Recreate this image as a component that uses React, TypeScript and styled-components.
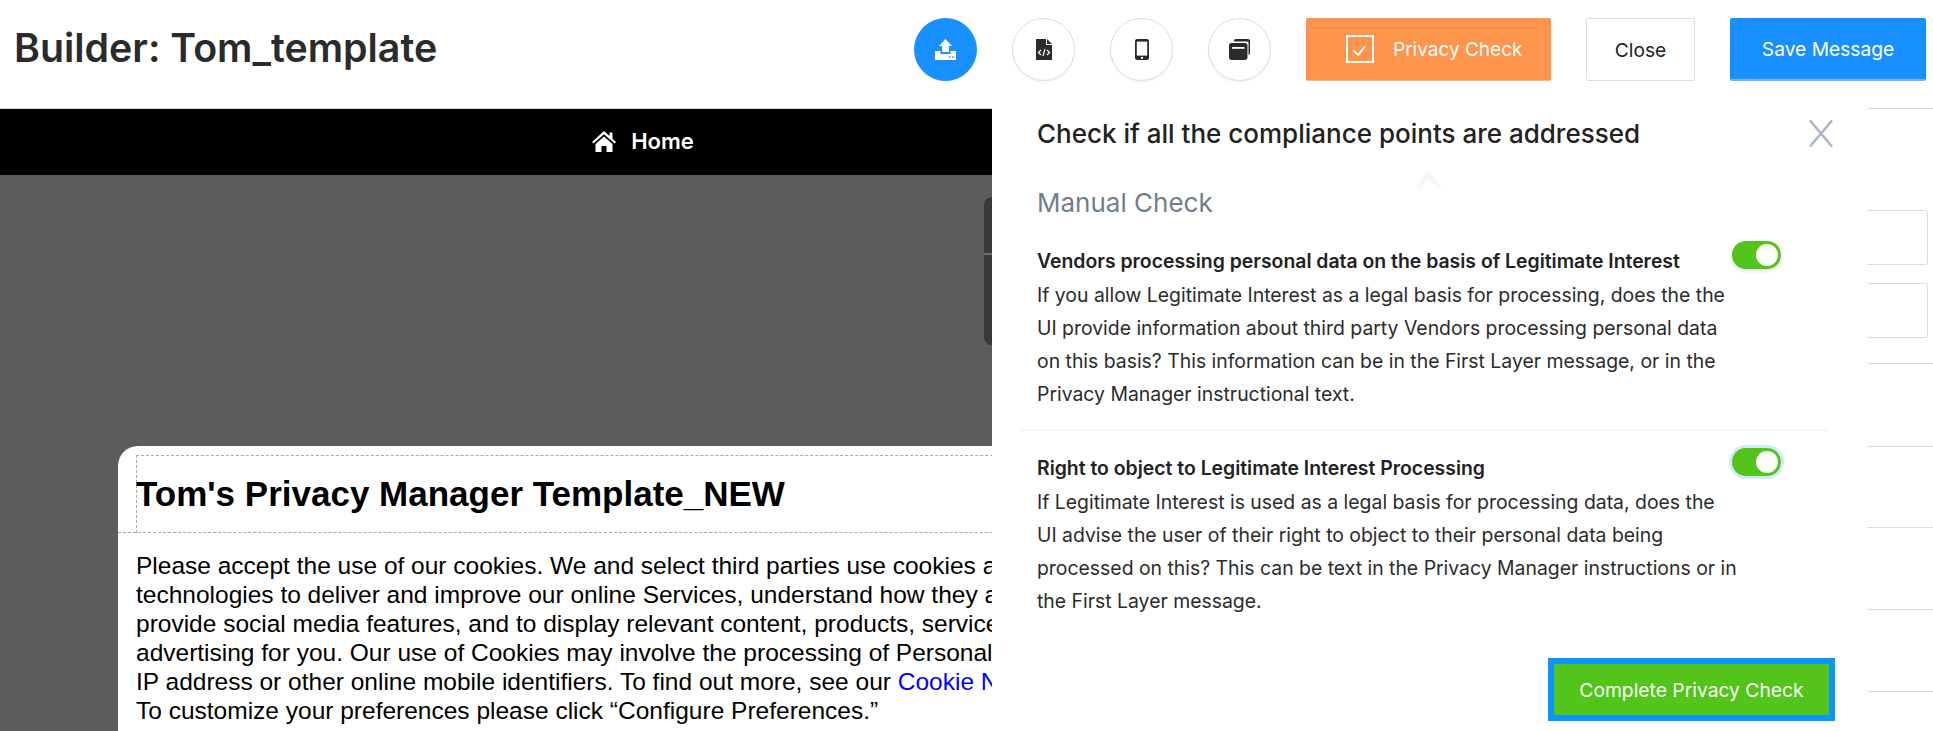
import React from 'react';
import styled, { createGlobalStyle } from 'styled-components';

const Global = createGlobalStyle`
html, body {
  margin: 0;
  height: 100%;
  overflow: hidden;
  background: #fff;
}
* { box-sizing: border-box; }
`

const Page = styled.div`
width: 1933px;
height: 731px;
display: flex;
flex-direction: column;
overflow: hidden;
font-family: "Inter", "Liberation Sans", sans-serif;
color: #222;
`

const Header = styled.header`
height: 108px;
flex: none;
display: flex;
align-items: flex-start;
padding: 18px 7px 0 14px;
`

const Title = styled.h1`
margin: 0;
flex: 1;
font-size: 39.3px;
line-height: 60px;
font-weight: 600;
color: #2b2b2b;
`

const IconRow = styled.div`
display: flex;
gap: 35px;
margin-right: 35px;
`

const Round = styled.button<{ $active?: boolean }>`
width: 63px;
height: 63px;
padding: 0;
display: flex;
align-items: center;
justify-content: center;
border-radius: 50%;
border: 1px solid ${({ $active }) => ($active ? '#1890ff' : '#dcdcdc')};
background: ${({ $active }) => ($active ? '#1890ff' : '#fff')};
box-shadow: 0 2px 2px rgba(0, 0, 0, 0.04);
`

const Action = styled.button<{ $tone: 'orange' | 'plain' | 'blue'; $width: number }>`
width: ${({ $width }) => $width}px;
height: 63px;
padding: ${({ $tone }) => ($tone === 'orange' ? '0 0 0 40px' : 0)};
display: flex;
align-items: center;
justify-content: ${({ $tone }) => ($tone === 'orange' ? 'flex-start' : 'center')};
font: 400 ${({ $tone }) => ($tone === 'orange' ? 19 : 19.2)}px "Inter", "Liberation Sans", sans-serif;
border-radius: 2px;
color: ${({ $tone }) => ($tone === 'plain' ? '#222' : '#fff')};
background: ${({ $tone }) => ($tone === 'orange' ? '#ff944d' : $tone === 'blue' ? '#1890ff' : '#fff')};
border: ${({ $tone }) => ($tone === 'plain' ? '1px solid #dedede' : 'none')};
border-bottom: ${({ $tone }) => ($tone === 'blue' ? '2px solid #69b7ff' : $tone === 'orange' ? '1px solid #f5b78c' : '1px solid #dedede')};
margin-left: ${({ $tone }) => ($tone === 'orange' ? 0 : 35)}px;
gap: 19px;
`

const Workspace = styled.main`
flex: 1;
min-height: 0;
display: grid;
grid-template-columns: 992px 875px 66px;
`

const Canvas = styled.section`
position: relative;
display: flex;
flex-direction: column;
background: #5c5c5c;
overflow: hidden;
border-top: 1px solid #d9d9d9;
`

const Nav = styled.nav`
height: 66px;
flex: none;
display: flex;
align-items: center;
justify-content: center;
gap: 15px;
padding: 0 0 2px 294px;
background: #000;
color: #fff;
font-size: 22px;
font-weight: 600;
`

const DarkRail = styled.div`
position: absolute;
top: 88px;
right: 0;
width: 8px;
height: 148px;
border-radius: 8px 0 0 8px;
background: #3a3a3a;
&::after {
  content: '';
  position: absolute;
  top: 56px;
  left: 0;
  right: 0;
  height: 2px;
  background: #6a6a6a;
}
`

const Stage = styled.div`
flex: 1;
padding: 271px 0 0 118px;
`

const Message = styled.article`
width: 1000px;
height: 400px;
border-radius: 20px 0 0 0;
background: #fff;
font-family: "Liberation Sans", Arial, sans-serif;
color: #000;
`

const MessageHead = styled.div`
height: 87px;
padding-top: 9px;
border-bottom: 1px dashed #aaa;
`

const HeadBox = styled.div`
height: 78px;
margin-left: 18px;
padding-bottom: 2px;
display: flex;
align-items: center;
border: 1px dashed #aaa;
border-bottom: 0;
border-right: 0;
`

const MessageTitle = styled.h2`
margin: 0 0 0 -1px;
font-size: 35px;
font-weight: 700;
white-space: nowrap;
`

const MessageBody = styled.p`
margin: 18px 0 0 18px;
font-size: 24.5px;
line-height: 29px;
white-space: nowrap;
a {
  color: #0000ff;
  text-decoration: none;
}
`

const Panel = styled.aside`
background: #fff;
padding: 0 32px 0 45px;
display: flex;
flex-direction: column;
position: relative;
`

const PanelHead = styled.div`
display: flex;
align-items: center;
justify-content: space-between;
height: 50px;
`

const PanelTitle = styled.h3`
margin: 0;
font-size: 26px;
font-weight: 500;
color: #222;
`

const CloseX = styled.button`
border: 0;
background: none;
padding: 0;
margin-right: 2px;
display: flex;
`

const Fold = styled.div`
position: absolute;
top: 62px;
left: 423px;
display: flex;
`

const Subhead = styled.h4`
margin: 29px 0 0;
font-size: 26px;
line-height: 32px;
font-weight: 400;
color: #6f7f8f;
`

const Check = styled.div<{ $first?: boolean }>`
display: flex;
justify-content: space-between;
align-items: flex-start;
margin-left: -17px;
padding: ${({ $first }) => ($first ? 22 : 17)}px 46px 0 17px;
height: ${({ $first }) => ($first ? 212 : 227)}px;
width: 807px;
flex: none;
border-bottom: ${({ $first }) => ($first ? '1px solid #eee' : 'none')};
`

const CheckText = styled.div`
flex: 1;
min-width: 0;
`

const CheckTitle = styled.div`
font-size: 19.4px;
line-height: 28px;
font-weight: 600;
padding-top: 6px;
margin-bottom: 4px;
white-space: nowrap;
`

const CheckBody = styled.p`
margin: 0;
font-size: 19.4px;
line-height: 33px;
white-space: nowrap;
color: #2b2b2b;
`

const Toggle = styled.span<{ $focus?: boolean }>`
flex: none;
width: 49px;
height: 28px;
border-radius: 14px;
background: #52c41a;
display: flex;
justify-content: flex-end;
align-items: center;
padding-right: 3px;
box-shadow: ${({ $focus }) => ($focus ? '0 0 0 3px rgba(24, 144, 255, 0.2)' : '0 2px 4px rgba(0, 0, 0, 0.12)')};
&::after {
  content: '';
  width: 22px;
  height: 22px;
  border-radius: 50%;
  background: #fff;
}
`

const Complete = styled.button`
align-self: flex-end;
width: 287px;
height: 63px;
flex: none;
padding: 0;
border: 6px solid #0a95ff;
background: #52c41a;
color: #fff;
font: 400 19.3px "Inter", "Liberation Sans", sans-serif;
`

const Rail = styled.aside`
display: flex;
flex-direction: column;
`

const RailLine = styled.div<{ $gap: number }>`
margin-top: ${({ $gap }) => $gap}px;
height: 1px;
background: #ddd;
`

const RailBox = styled.div<{ $gap: number }>`
margin-top: ${({ $gap }) => $gap}px;
width: 61px;
height: 55px;
border: 1px solid #ddd;
border-left: 0;
border-radius: 0 3px 3px 0;
`

const UploadIcon = () => (
  <svg width="21" height="21" viewBox="0 0 21 21" fill="#fff">
    <path d="M10.5 0 L17 7 H14 V13 H7 V7 H4 Z" />
    <path d="M0 12 H5.5 V15 H15.5 V12 H21 V21 H0 Z" />
    <rect x="14" y="17.5" width="1.8" height="1.2" fill="#1890ff" />
    <rect x="17" y="17.5" width="1.8" height="1.2" fill="#1890ff" />
  </svg>
)

const FileCodeIcon = () => (
  <svg width="16" height="21" viewBox="0 0 16 21">
    <path d="M0 0 H10 V6 H16 V21 H0 Z" fill="#2b2b2b" />
    <path d="M11 0 L16 5 H11 Z" fill="#2b2b2b" />
    <path d="M5 11 L2.5 13.5 L5 16 M11 11 L13.5 13.5 L11 16 M9 10 L7 17" stroke="#fff" strokeWidth="1.2" fill="none" />
  </svg>
)

const PhoneIcon = () => (
  <svg width="14" height="21" viewBox="0 0 14 21">
    <rect width="14" height="21" rx="2.2" fill="#2b2b2b" />
    <rect x="1.8" y="2.6" width="10.4" height="14" fill="#fff" />
    <rect x="6" y="18" width="2" height="1.8" fill="#fff" />
  </svg>
)

const StackIcon = () => (
  <svg width="21" height="21" viewBox="0 0 21 21">
    <path d="M5 2 Q5 0 7 0 H19 Q21 0 21 2 V14 Q21 16 19.5 16 V3.5 Q19.5 2.6 18.5 2.6 H5 Z" fill="#2b2b2b" />
    <rect y="4" width="18.5" height="17" rx="2.4" fill="#2b2b2b" />
    <rect x="3" y="8" width="12.5" height="1.8" fill="#fff" />
  </svg>
)

const PrivacyIcon = () => (
  <svg width="28" height="28" viewBox="0 0 28 28" fill="none" stroke="#fff">
    <rect x="1" y="1" width="26" height="26" strokeWidth="2" />
    <path d="M7.5 15.5 L12.3 20 L19 11.3" strokeWidth="1.8" />
  </svg>
)

const HomeIcon = () => (
  <svg width="24" height="21" viewBox="0 0 24 21" fill="#fff">
    <path d="M12 0 L17.5 5 V1.5 H20.5 V7.8 L24 11 L22.6 12.6 L12 3.2 L1.4 12.6 L0 11 Z" />
    <path d="M12 5.4 L20.5 13 V21 H14.5 V15 H9.5 V21 H3.5 V13 Z" />
  </svg>
)

const XIcon = () => (
  <svg width="24" height="27" viewBox="0 0 24 27" stroke="#aab6ca" strokeWidth="2.6" fill="none">
    <path d="M1 0.5 L23 26.5 M23 0.5 L1 26.5" />
  </svg>
)

const FoldIcon = () => (
  <svg width="27" height="20" viewBox="0 0 27 20">
    <path d="M0 18 L13.5 0 L27 18 L22 18 L13.5 9 L5 18 Z" fill="#f6f7f8" />
  </svg>
)

const App = () => (
  <Page>
    <Global />
    <Header>
      <Title>Builder: Tom_template</Title>
      <IconRow>
        <Round $active><UploadIcon /></Round>
        <Round><FileCodeIcon /></Round>
        <Round><PhoneIcon /></Round>
        <Round><StackIcon /></Round>
      </IconRow>
      <Action $tone="orange" $width={245}><PrivacyIcon />Privacy Check</Action>
      <Action $tone="plain" $width={109}>Close</Action>
      <Action $tone="blue" $width={196}>Save Message</Action>
    </Header>
    <Workspace>
      <Canvas>
        <Nav><HomeIcon />Home</Nav>
        <DarkRail />
        <Stage>
          <Message>
            <MessageHead>
              <HeadBox>
                <MessageTitle>Tom's Privacy Manager Template_NEW</MessageTitle>
              </HeadBox>
            </MessageHead>
            <MessageBody>
              Please accept the use of our cookies. We and select third parties use cookies and similar<br />
              technologies to deliver and improve our online Services, understand how they are used, to<br />
              provide social media features, and to display relevant content, products, services and<br />
              advertising for you. Our use of Cookies may involve the processing of Personal Data such as<br />
              IP address or other online mobile identifiers. To find out more, see our <a href="#cookie">Cookie Notice</a>.<br />
              To customize your preferences please click “Configure Preferences.”
            </MessageBody>
          </Message>
        </Stage>
      </Canvas>
      <Panel>
        <PanelHead>
          <PanelTitle>Check if all the compliance points are addressed</PanelTitle>
          <CloseX><XIcon /></CloseX>
        </PanelHead>
        <Fold><FoldIcon /></Fold>
        <Subhead>Manual Check</Subhead>
        <Check $first>
          <CheckText>
            <CheckTitle>Vendors processing personal data on the basis of Legitimate Interest</CheckTitle>
            <CheckBody>
              If you allow Legitimate Interest as a legal basis for processing, does the the<br />
              UI provide information about third party Vendors processing personal data<br />
              on this basis? This information can be in the First Layer message, or in the<br />
              Privacy Manager instructional text.
            </CheckBody>
          </CheckText>
          <Toggle />
        </Check>
        <Check>
          <CheckText>
            <CheckTitle>Right to object to Legitimate Interest Processing</CheckTitle>
            <CheckBody>
              If Legitimate Interest is used as a legal basis for processing data, does the<br />
              UI advise the user of their right to object to their personal data being<br />
              processed on this? This can be text in the Privacy Manager instructions or in<br />
              the First Layer message.
            </CheckBody>
          </CheckText>
          <Toggle $focus />
        </Check>
        <Complete>Complete Privacy Check</Complete>
      </Panel>
      <Rail>
        <RailLine $gap={0} />
        <RailBox $gap={101} />
        <RailBox $gap={18} />
        {[25, 82, 80, 81, 81].map((gap, i) => <RailLine key={i} $gap={gap} />)}
      </Rail>
    </Workspace>
  </Page>
);

export default App;
